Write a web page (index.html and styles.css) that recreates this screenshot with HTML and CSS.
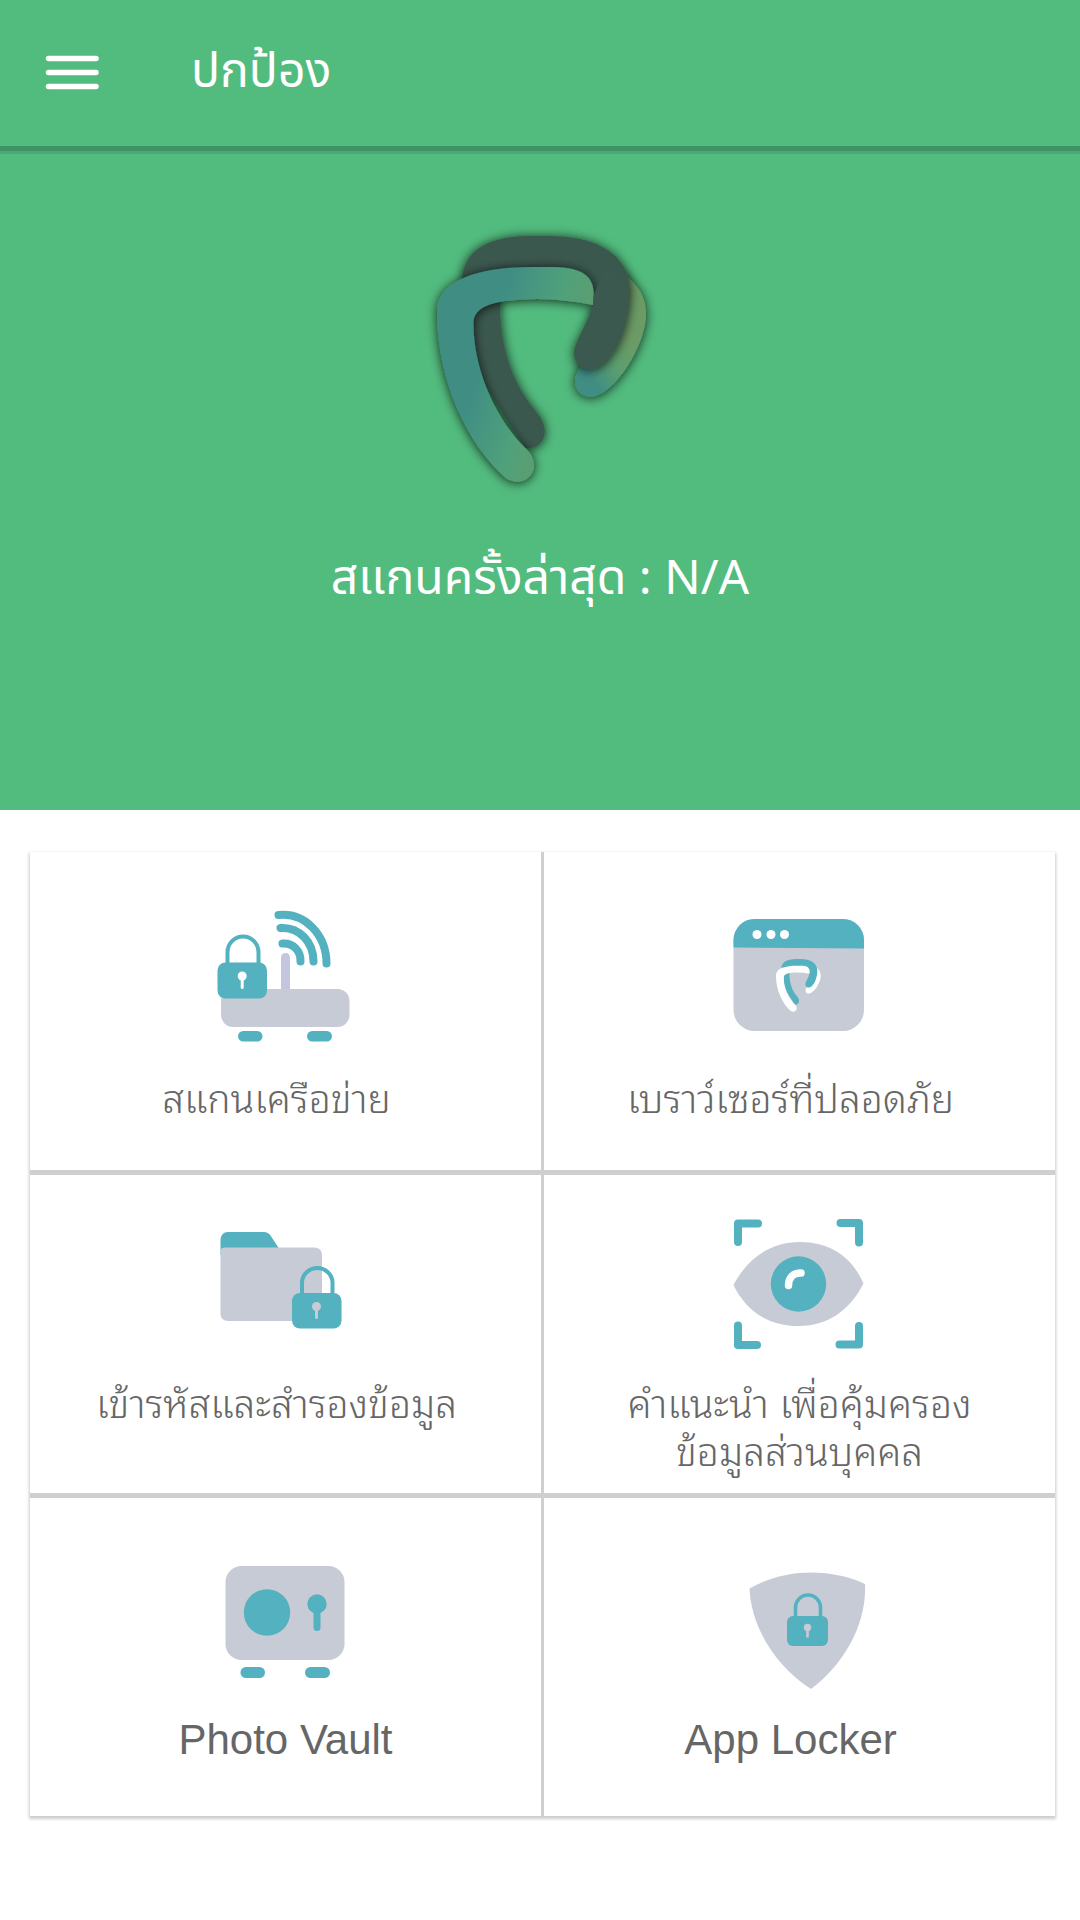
FILE: index.html
```
<!DOCTYPE html>
<html lang="th">
<head>
<meta charset="utf-8">
<meta name="viewport" content="width=device-width, initial-scale=1">
<title>ปกป้อง</title>
<link rel="stylesheet" href="styles.css">
</head>
<body>
<header class="bar">
  <button class="menu" type="button" aria-label="เมนู">
    <svg width="54" height="36" viewBox="0 0 54 36"><path d="M3.500 3.500H51M3.500 17.500H51M3.500 31.500H51" stroke="#fff" stroke-width="5.500" stroke-linecap="round"/></svg>
  </button>
  <h1 class="title">ปกป้อง</h1>
</header>

<section class="hero">
  <svg class="logo" width="280" height="320" viewBox="0 0 840 960" aria-hidden="true">
    <defs>
      <linearGradient id="front" gradientUnits="userSpaceOnUse" x1="210" y1="390" x2="570" y2="510">
        <stop offset="0" stop-color="#3f8d84"/><stop offset=".15" stop-color="#3f8d84"/><stop offset=".6" stop-color="#50a17a"/><stop offset="1" stop-color="#639c6b"/>
      </linearGradient>
      <linearGradient id="back" gradientUnits="userSpaceOnUse" x1="580" y1="550" x2="710" y2="450">
        <stop offset="0" stop-color="#3f8d84"/><stop offset=".5" stop-color="#5a9f70"/><stop offset="1" stop-color="#6c9b66"/>
      </linearGradient>
      <filter id="shade" x="-20%" y="-20%" width="140%" height="140%">
        <feDropShadow dx="0" dy="3" stdDeviation="16" flood-color="#000" flood-opacity=".8"/>
      </filter>
      <path id="tail" d="M640 205C700 235 738 280 738 340C738 440 640 590 572 591C524 588 512 540 540 505L600 430C640 380 650 300 640 205Z"/>
      <path id="leg" d="M222 290H300C298 430 330 540 405 630C440 670 440 705 425 725Q405 748 375 743L220 500Z"/>
      <path id="arch" d="M187 250C183 155 260 108 390 108H450C600 108 688 170 690 270C688 400 630 508 566 508C530 506 516 470 526 440C545 395 582 350 581 270C575 220 540 201 480 202L300 225Z"/>
      <path id="arm" d="M111 330C115 235 250 201 400 201H450C550 201 582 230 581 285L579 315Q500 298 410 297C300 300 222 310 220 370C222 530 300 670 375 743C400 765 405 790 400 810C388 845 350 855 318 835C200 730 110 540 111 330Z"/>
    </defs>
    <use href="#tail" fill="url(#back)" filter="url(#shade)"/>
    <use href="#leg" fill="#3b594f" filter="url(#shade)"/>
    <use href="#arch" fill="#3b594f" filter="url(#shade)"/>
    <use href="#arm" fill="url(#front)" filter="url(#shade)"/>
    <path d="M581 285L579 315C565 365 540 400 526 440C516 470 530 506 566 508C630 508 688 400 690 270L620 200Z" fill="#3b594f"/>
  </svg>
  <p class="status">สแกนครั้งล่าสุด : N/A</p>
</section>

<main class="grid">
  <a class="card" href="#network">
    <svg class="icon" width="160" height="200" viewBox="206 876 160 200" aria-hidden="true">
      <rect x="281" y="953" width="9" height="40" rx="4.500" fill="#c3c6de"/>
      <rect x="221" y="989" width="128.500" height="38" rx="12" fill="#c7cbd5"/>
      <g fill="#53b1c0"><rect x="238" y="1031" width="24.500" height="10.500" rx="5.200"/><rect x="307" y="1031" width="25" height="10.500" rx="5.200"/></g>
      <path d="M278.500 915C305 912 326.500 935 326.500 963.500M280.500 928C299 926.500 313.500 942 313.500 961.500M282.500 943.500C293 942.500 301 951 300.500 961.500" fill="none" stroke="#53b1c0" stroke-width="8" stroke-linecap="round"/>
      <path d="M227.500 965V952A15.500 15.500 0 0 1 258.500 952V965" fill="none" stroke="#53b1c0" stroke-width="4"/>
      <rect x="217.500" y="962.500" width="49.500" height="36" rx="8" fill="#53b1c0"/>
      <circle cx="242.200" cy="976" r="4.500" fill="#fff"/><path d="M242.200 978V987.500" stroke="#fff" stroke-width="3" stroke-linecap="round"/>
    </svg>
    <span class="label shifted">สแกนเครือข่าย</span>
  </a>
  <a class="card" href="#browser">
    <svg class="icon" width="160" height="200" viewBox="720 876 160 200" aria-hidden="true">
      <rect x="733.500" y="919" width="130.500" height="112" rx="21" fill="#c7cbd5"/>
      <path d="M733.500 947.500V940A21 21 0 0 1 754.500 919H843A21 21 0 0 1 864 940V948.500Z" fill="#53b1c0"/>
      <g fill="#fff"><circle cx="757" cy="934.500" r="4.500"/><circle cx="771" cy="934.500" r="4.500"/><circle cx="784.500" cy="934.500" r="4.500"/></g>
      <g transform="translate(768 951.300) scale(.0715)">
        <use href="#tail" fill="#fff"/><use href="#leg" fill="#53b1c0"/><use href="#arch" fill="#53b1c0"/><use href="#arm" fill="#fff"/>
      </g>
    </svg>
    <span class="label shifted">เบราว์เซอร์ที่ปลอดภัย</span>
  </a>
  <a class="card upper" href="#backup">
    <svg class="icon" width="160" height="200" viewBox="206 1181 160 200" aria-hidden="true">
      <path d="M220.500 1255V1240Q221 1232 228 1232H264Q268 1232 270.500 1235.500L280 1250Z" fill="#53b1c0"/>
      <path d="M220.500 1250Q221 1247.500 225 1247.500H315Q322 1248 322 1255V1321H228Q221 1321 220.500 1314Z" fill="#c7cbd5"/>
      <path d="M308 1293V1275L322 1268V1293Z" fill="#c7cbd5"/>
      <path d="M302 1295V1282A15.300 15.300 0 0 1 332.500 1282V1295" fill="none" stroke="#53b1c0" stroke-width="4"/>
      <rect x="292" y="1293" width="49.500" height="35.500" rx="8" fill="#53b1c0"/>
      <circle cx="316.500" cy="1306.500" r="4.500" fill="#c7cbd5"/><path d="M316.500 1308V1317.500" stroke="#c7cbd5" stroke-width="3" stroke-linecap="round"/>
    </svg>
    <span class="label shifted">เข้ารหัสและสำรองข้อมูล</span>
  </a>
  <a class="card upper" href="#privacy">
    <svg class="icon" width="160" height="200" viewBox="720 1181 160 200" aria-hidden="true">
      <path d="M733.500 1285C747 1259 770 1242 800 1242C832 1242 853 1259 863.500 1283.500C850 1310 828 1326 799 1326C768 1326 746 1311 733.500 1285Z" fill="#c7cbd5"/>
      <circle cx="798.500" cy="1284" r="27.700" fill="#53b1c0"/>
      <path d="M788.500 1285.500C788.500 1278 793 1272.500 801 1273" fill="none" stroke="#fff" stroke-width="7.500" stroke-linecap="round"/>
      <path d="M738 1242V1223.500H758M840.500 1223H859V1242.500M738 1325.500V1345H757M839.500 1344.500H859V1326" fill="none" stroke="#53b1c0" stroke-width="8" stroke-linecap="round" stroke-linejoin="round"/>
    </svg>
    <span class="label">คำแนะนำ เพื่อคุ้มครอง<br>ข้อมูลส่วนบุคคล</span>
  </a>
  <a class="card" href="#vault">
    <svg class="icon" width="160" height="200" viewBox="206 1522 160 200" aria-hidden="true">
      <rect x="225.500" y="1566" width="119" height="94" rx="16" fill="#c7cbd5"/>
      <g fill="#53b1c0"><circle cx="267" cy="1612.500" r="23.200"/><circle cx="317" cy="1604" r="9.700"/><rect x="313.500" y="1606" width="7" height="25" rx="3.500"/><rect x="240.500" y="1667" width="24.500" height="11" rx="5.500"/><rect x="305" y="1667" width="25" height="11" rx="5.500"/></g>
    </svg>
    <span class="label latin">Photo Vault</span>
  </a>
  <a class="card" href="#locker">
    <svg class="icon" width="160" height="200" viewBox="720 1522 160 200" aria-hidden="true">
      <path d="M749.500 1588.500C785 1568 831 1568 865 1584C867 1625 843 1665 811 1689C776 1667 751 1627 749.500 1588.500Z" fill="#c7cbd5"/>
      <path d="M795.500 1618V1607.500A12.500 12.500 0 0 1 820.500 1607.500V1618" fill="none" stroke="#53b1c0" stroke-width="3.500"/>
      <rect x="787" y="1616" width="41" height="30" rx="6" fill="#53b1c0"/>
      <circle cx="807.500" cy="1627.500" r="3.700" fill="#c7cbd5"/><path d="M807.500 1629V1636.500" stroke="#c7cbd5" stroke-width="2.700" stroke-linecap="round"/>
    </svg>
    <span class="label latin shifted">App Locker</span>
  </a>
</main>
</body>
</html>
```
FILE: styles.css
```
* { box-sizing: border-box; }
body {
  margin: 0;
  background: #fff;
  color: #666;
  font-family: "Liberation Sans", "Noto Sans Thai Looped", sans-serif;
}
.bar {
  position: relative;
  display: flex;
  align-items: center;
  gap: 92px;
  height: 151px;
  padding: 0 45px;
  background: #52bb7e;
  border-bottom: 5px solid #3f9264;
  box-shadow: 0 3px 0 #4aaa72;
}
.menu {
  display: flex;
  padding: 0;
  border: 0;
  background: none;
}
.title, .status {
  margin: 0;
  color: #fff;
  font-family: "Noto Sans Thai", "Loma", serif;
  font-size: 48px;
  font-weight: 400;
  line-height: 76px;
}
.hero {
  display: flex;
  flex-direction: column;
  align-items: center;
  gap: 22px;
  padding: 49px 24px 192px;
  background: #52bb7e;
}
.grid {
  display: grid;
  grid-template-columns: 1fr 1fr;
  gap: 5px 3px;
  margin: 42px 25px 40px 30px;
  background: #cfcfcf;
  box-shadow: 0 2px 3px 1px #ccc;
}
.card {
  display: flex;
  flex-direction: column;
  align-items: center;
  min-height: 318px;
  padding-top: 24px;
  background: #fff;
  color: inherit;
  text-decoration: none;
}
.upper { padding-top: 6px; }
.icon { flex: none; }
.label {
  font-size: 39px;
  font-weight: 300;
  line-height: 48px;
  text-align: center;
}
.latin {
  font-size: 42px;
  font-weight: 400;
  line-height: 36px;
}
.shifted { padding-right: 18px; }
```
